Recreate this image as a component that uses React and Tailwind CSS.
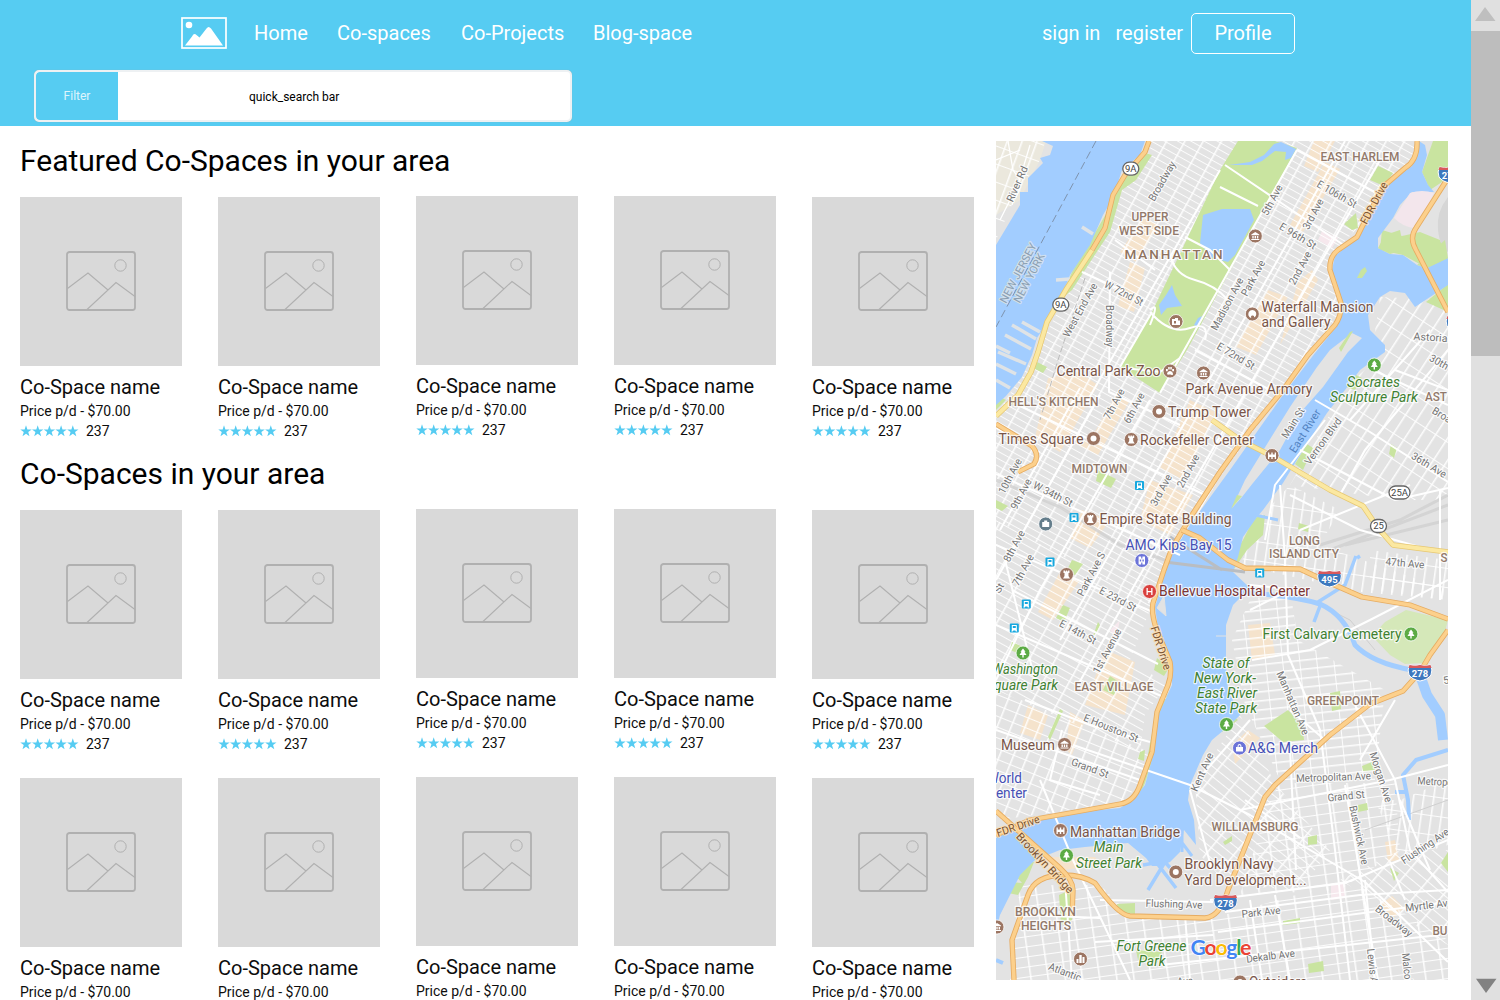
import React from "react";

const STAR = "M6 .3 7.400 4.400 11.700 4.450 8.250 7 9.500 11.200 6 8.700 2.500 11.200 3.750 7 .3 4.450 4.600 4.400Z";

function Card({ raised }) {
  return (
    <article className={raised ? "-mt-px w-[162px]" : "w-[162px]"}>
      <div className="flex h-[169px] items-center justify-center bg-[#d9d9d9] pb-[2px]">
        <svg width="70" height="60" viewBox="0 0 70 60" fill="none" stroke="#b0b0b0">
          <rect x="1" y="1" width="68" height="58" rx="2.5" strokeWidth="1.8" />
          <circle cx="54.5" cy="14.5" r="5.7" />
          <path d="M1.5 37.5 22 22l20 17M20.500 59 50 31.500 69 45.500" strokeWidth="1.1" />
        </svg>
      </div>
      <h3 className="mt-[9px] h-6 whitespace-nowrap text-[20px] leading-6">Co-Space name</h3>
      <p className="mt-[3px] h-[18px] text-[14px] leading-[18px]">Price p/d - $70.00</p>
      <div className="mt-[2px] flex h-[18px] items-center text-[14px] leading-[18px]">
        <svg className="mr-[7px]" width="59" height="12" viewBox="0 0 59 12" fill="#56ccf2">
          {[0, 1, 2, 3, 4].map((i) => (
            <path key={i} d={STAR} transform={`translate(${i * 11.7})`} />
          ))}
        </svg>
        237
      </div>
    </article>
  );
}

function CardRow() {
  return (
    <div className="flex gap-9">
      {[0, 1, 2, 3, 4].map((i) => (
        <Card key={i} raised={i === 2 || i === 3} />
      ))}
    </div>
  );
}

/* [id, angle, column width, row height] */
const GRIDS = [
  ["mh", 29, 16, 6.4],
  ["lm", 22, 13, 10],
  ["ev", 29, 23, 7],
  ["as", 33, 12, 22],
  ["li", 8, 10, 19],
  ["gp", 84, 9, 17],
  ["wb", 39, 22, 8],
  ["bk", -8, 17, 10],
  ["bw", 40, 21, 9],
  ["nj", 20, 14, 17],
];

const BLOCKS = [
  ["mh", "1150,141 1417,141 1410,165 1380,188 1365,220 1332,255 1330,270 1341,305 1335,325 1308,355 1220,477 1165,570 1152,605 996,520 996,415 1032,360 1090,250 1125,175"],
  ["ev", "996,520 1152,605 1130,660 1168,685 1145,714 1140,752 996,690"],
  ["lm", "996,690 1150,752 1140,785 1120,803 1065,811 996,820"],
  ["as", "1380,297 1448,300 1448,500 1400,500 1290,485 1330,414 1348,385 1370,365"],
  ["li", "1290,485 1340,510 1320,545 1448,590 1448,600 1360,592 1240,565 1262,515"],
  ["li", "1370,550 1448,560 1448,600 1370,590"],
  ["gp", "1250,600 1290,590 1298,640 1350,670 1385,690 1375,780 1280,780 1245,705 1232,640"],
  ["wb", "1240,715 1275,783 1330,850 1300,890 1228,885 1200,855 1195,783"],
  ["bk", "1020,885 1100,885 1130,915 1213,918 1350,880 1448,940 1448,980 1010,980"],
  ["bk", "1280,783 1395,783 1400,850 1340,890 1240,895 1270,800"],
  ["bw", "1340,880 1400,850 1448,850 1448,945"],
  ["li", "1400,800 1448,780 1448,845 1400,860 1375,800"],
  ["nj", "996,141 1045,141 1040,160 1028,178 1012,205 996,240"],
];

const PEACH = [
  "1290,225 1325,162 1340,169 1303,232",
  "1314,141 1335,141 1318,172 1304,166",
  "1143,218 1158,225 1136,262 1120,252",
  "1130,262 1145,268 1134,312 1118,306",
  "1268,290 1288,297 1256,355 1236,347",
  "1280,345 1298,282 1312,270 1318,280",
  "1048,378 1078,372 1098,385 1060,452 1035,438",
  "1096,430 1116,395 1129,402 1098,455 1080,446",
  "1190,400 1215,412 1208,428 1193,460 1180,478 1160,468",
  "1150,480 1193,495 1170,535 1140,520",
  "1082,510 1110,520 1090,548 1070,538",
  "1060,572 1080,580 1053,620 1038,612",
  "1248,625 1270,623 1275,655 1252,660",
  "1105,650 1135,662 1125,715 1085,705",
  "1028,705 1048,715 1040,740 1020,733",
  "1070,712 1085,720 1072,755 1066,750",
  "1045,857 1095,857 1100,865 1050,872",
  "1232,745 1248,730 1260,738 1235,764",
  "1385,842 1395,840 1399,860 1388,862",
  "1380,905 1392,896 1404,908 1393,918",
];

const PARKS = [
  "1238,141 1275,141 1297,148 1262,212 1187,350 1160,393 1120,367 1152,312 1220,170",
  "1143,152 1152,155 1136,180 1122,190 1110,232 1098,250 1072,290 1060,300 1072,272 1106,214 1117,186",
  "1378,166 1393,173 1384,186 1370,180",
  "1433,141 1448,141 1448,178 1430,190 1422,172",
  "1382,230 1402,236 1420,232 1440,240 1448,260 1427,268 1403,255 1380,250",
  "1448,284 1448,312 1426,302",
  "1356,213 1358,228 1352,230 1344,224",
  "1341,352 1353,331 1348,328 1337,340",
  "1343,386 1352,373 1362,378 1355,390",
  "1307,444 1313,448 1303,470 1295,464",
  "1243,540 1254,518 1265,515 1263,535 1247,550 1232,572 1227,566",
  "1391,444 1397,448 1394,458 1389,454",
  "1299,523 1309,526 1308,532 1298,529",
  "1037,362 1047,367 1043,373 1033,368",
  "996,395 1006,400 996,410",
  "1098,470 1116,479 1111,488 1096,481",
  "1072,560 1083,564 1075,575 1066,572",
  "996,500 1008,506 1002,511 996,508",
  "1063,605 1070,608 1064,622 1056,618",
  "1100,625 1096,633 1093,636 1098,622",
  "1012,642 1030,650 1022,655 1010,650",
  "1110,676 1119,682 1114,695 1103,690",
  "1060,709 1063,711 1050,740 1048,737",
  "1157,658 1169,668 1164,676 1154,670",
  "1140,752 1145,750 1144,761 1138,759",
  "1170,690 1162,730 1145,783 1136,803 1124,806 1143,780 1155,718",
  "1264,726 1288,710 1302,725 1304,740 1283,742",
  "1330,693 1340,691 1341,709 1332,711",
  "1362,766 1372,762 1375,770 1363,771",
  "1308,837 1317,835 1317,844 1308,845",
  "1390,868 1399,873 1394,881",
  "1223,842 1232,836 1232,841 1225,845",
  "1358,805 1367,803 1368,810 1358,812",
  "1015,875 1023,862 1034,862 1028,877 1018,895 1003,892 1008,882 1022,883",
  "1059,895 1070,890 1072,920 1061,925",
  "1117,904 1135,903 1135,914 1118,912",
  "1136,950 1162,952 1157,963 1138,960",
  "1308,964 1323,961 1324,971 1309,973",
  "1283,921 1300,918 1300,923 1283,925",
  "1448,852 1448,872 1441,863",
  "1218,718 1230,714 1238,720 1222,732",
];

const WATER = [
  "1042,141 1145,141 1140,155 1122,170 1113,198 1103,215 1090,245 1070,275 1065,288 1050,318 1037,338 1032,355 1022,377 1006,396 996,405 996,245 1020,205 1020,192 1028,192 1028,178 1043,163 1040,158 1050,155 1053,146",
  "1419,141 1425,145 1427,155 1422,172 1428,185 1434,192 1412,192 1400,205 1393,218 1378,238 1378,248 1390,254 1403,255 1417,265 1427,268 1448,258 1448,285 1433,295 1415,307 1405,293 1390,291 1380,297 1368,315 1370,330 1385,345 1385,352 1360,370 1345,390 1327,413 1303,450 1283,483 1263,510 1257,517 1243,537 1238,557 1233,572 1250,588 1233,605 1226,625 1226,665 1228,690 1240,715 1230,725 1212,740 1203,755 1190,785 1188,800 1194,820 1196,845 1184,830 1180,852 1170,862 1160,866 1152,866 1146,858 1128,843 1085,847 1060,850 1035,860 1020,875 1005,905 1000,915 996,930 996,838 1030,820 1070,813 1120,808 1133,800 1145,785 1154,752 1157,718 1172,685 1171,660 1158,628 1155,607 1166,570 1173,552 1190,525 1230,470 1283,395 1315,353 1337,326 1343,305 1332,270 1335,256 1352,242 1367,220 1382,188 1412,166",
  "1203,215 1222,209 1250,209 1254,220 1235,255 1228,262 1212,258 1200,243",
  "1172,285 1175,295 1182,306 1167,308 1161,315 1159,305 1166,295",
  "1274,144 1281,142 1296,149 1291,158 1285,160 1286,152 1275,151 1262,161 1252,165 1229,165 1250,162 1264,155",
  "1198,318 1202,316 1198,327 1194,325",
];

const WHITE = [
  "M1025 700 1090 725 1150 742M1073 745 1190 785 1250 815 1365 882 1448 962M1040 780 1073 860 1130 980M1062 730 1050 780 1100 795M1005 560 1035 680M996 730 1140 780",
  "M1315 400 1370 432 1448 482M1448 350 1365 450 1340 495M1373 370 1448 405M1430 330 1350 420M1395 370 1448 390M1300 450 1395 500 1448 488M1325 420 1275 485 1265 540",
  "M1280 485 1285 560 1288 655 1320 730 1335 850 1350 980M1300 530 1410 485M1290 495 1360 530 1430 550M1250 585 1300 590M1252 660 1310 650 1370 620 1448 580M1290 710 1325 740M1250 610 1280 595M1440 490 1440 600M1355 705 1395 780 1410 850 1448 892",
  "M1190 790 1212 870M1195 783 1250 720M1240 810 1390 780 1448 765M1245 800 1300 838M1290 750 1296 870M1210 900 1345 883 1448 840M1225 912 1360 895 1448 890M1218 932 1448 902M1160 965 1440 935M1100 900 1213 902M1095 942 1213 935M1345 785 1378 980M1390 862 1405 900M1365 880 1375 980M1250 900 1262 980M1185 915 1190 980M1030 915 1100 918M1065 880 1072 980M1400 800 1430 870M1275 895 1290 980M1395 700 1360 760",
  "M1152 312 1120 367M1220 170 1085 405M1297 150 1160 393M1345 141 1255 300 1060 640M1380 160 1160 540 1075 690M1082 272 1132 295M1155 270 1115 240M1195 350 1270 390M1018 405 1205 495M996 474 1180 555M996 545 1153 612M1012 590 1158 664M996 625 1166 698M1225 165 1345 246M1297 150 1380 195M1110 272 1109 392 1180 425M1080 388 1000 530M1100 395 996 580M1150 400 1040 590 996 680",
  "M1185 237 1210 250 1230 270M1170 255Q1175 275 1195 280T1228 300M1220 187 1258 206M1150 325Q1160 300 1150 310M1150 312Q1170 335 1190 328T1205 340M1124 368 1160 372 1180 358",
];

const ORANGE = [
  "M1149 141 1145 152 1125 175 1113 195 1105 228 1092 250",
  "M996 424 1032 446Q1040 455 1034 464L1018 472",
  "M1417 141Q1418 160 1405 168L1384 186 1368 215 1357 237 1338 250Q1329 257 1330 270L1341 303Q1342 315 1335 325L1308 355 1283 390 1250 430 1220 472 1190 518 1172 548 1164 570 1153 603Q1151 612 1156 628L1170 662Q1172 675 1168 685L1157 712 1152 752 1140 785Q1134 802 1120 804L1070 813 1030 820 996 835",
  "M1448 178 1416 228Q1409 238 1416 250L1448 312",
  "M1182 530 1200 538 1228 560 1245 568 1300 569 1330 583 1362 597 1410 605 1448 619",
  "M1448 630 1430 655 1420 672 1403 691 1370 704 1330 735 1275 785 1265 797 1228 890Q1220 917 1205 918L1130 916Q1118 915 1095 883 1082 875 1064 875 1035 875 1028 895L1012 940 1014 980",
  "M996 811 1060 868Q1073 880 1073 890L1072 916",
];

const YELLOW = [
  "M1092 250 1067 288 1047 322 1038 352 1031 372 1018 395 996 416",
  "M1212 420 1240 440 1272 456 1330 490 1363 506 1378 528 1393 545 1448 552",
];

/* [text, centre x, centre y, font size, width, angle] */
const GREY = "#747474";
const STREETS = [
  ["River Rd", 1017, 184, 10.5, 38, -66],
  ["Broadway", 1162, 181, 10.5, 44, -60],
  ["W 72nd St", 1124, 293, 10.5, 42, 27],
  ["West End Ave", 1080, 310, 10.5, 60, -61],
  ["Broadway", 1110, 326, 10.5, 42, 90],
  ["5th Ave", 1272, 200, 10.5, 33, -62],
  ["3rd Ave", 1313, 214, 10.5, 33, -62],
  ["E 106th St", 1337, 194, 10.5, 44, 30],
  ["E 96th St", 1298, 236, 10.5, 41, 31],
  ["2nd Ave", 1300, 268, 10.5, 36, -62],
  ["Park Ave", 1253, 278, 10.5, 39, -62],
  ["Madison Ave", 1227, 304, 10.5, 58, -62],
  ["E 72nd St", 1236, 356, 10.5, 42, 31],
  ["7th Ave", 1114, 404, 10.5, 33, -62],
  ["6th Ave", 1134, 408, 10.5, 33, -62],
  ["2nd Ave", 1188, 471, 10.5, 36, -62],
  ["3rd Ave", 1161, 490, 10.5, 34, -62],
  ["10th Ave", 1010, 476, 10.5, 38, -62],
  ["9th Ave", 1021, 494, 10.5, 33, -62],
  ["W 34th St", 1053, 494, 10.5, 43, 27],
  ["8th Ave", 1014, 546, 10.5, 34, -62],
  ["7th Ave", 1023, 570, 10.5, 34, -62],
  ["Park Ave S", 1091, 574, 10.5, 48, -62],
  ["E 23rd St", 1118, 599, 10.5, 40, 28],
  ["E 14th St", 1078, 632, 10.5, 40, 28],
  ["1st Avenue", 1107, 651, 10.5, 49, -62],
  ["E Houston St", 1111, 728, 10.5, 58, 22],
  ["Grand St", 1090, 768, 10.5, 39, 20],
  ["Main St", 1293, 423, 10.5, 34, -58],
  ["Vernon Blvd", 1323, 441, 10.5, 55, -54],
  ["30th", 1439, 362, 10.5, 20, 29],
  ["Broadway", 1452, 421, 10.5, 44, 31],
  ["36th Ave", 1429, 465, 10.5, 39, 31],
  ["Astoria Blvd", 1442, 338, 10.5, 57, 4],
  ["47th Ave", 1405, 563, 10.5, 39, 5],
  ["Manhattan Ave", 1293, 703, 10.5, 68, 67],
  ["Kent Ave", 1202, 772, 10.5, 41, -66],
  ["Metropolitan Ave", 1333.500, 777, 10.5, 75, -2],
  ["Metropolitan", 1444, 782, 10.5, 53, 3],
  ["Morgan Ave", 1381, 777, 10.5, 52, 72],
  ["Grand St", 1346, 796, 10.5, 37, -6],
  ["Bushwick Ave", 1359, 835, 10.5, 60, 78],
  ["Flushing Ave", 1425, 846, 10.5, 55, -34],
  ["Flushing Ave", 1174, 904, 10.5, 57, 2],
  ["Park Ave", 1261, 912, 10.5, 39, -6],
  ["Broadway", 1394, 921, 10.5, 44, 38],
  ["Myrtle Ave", 1429, 905, 10.5, 48, -7],
  ["Dekalb Ave", 1270.500, 956, 10.5, 49, -7],
  ["Lewis Ave", 1373, 971, 10.5, 45, 84],
  ["Malcolm X Blvd", 1409, 986, 10.5, 66, 84],
  ["Atlantic", 1065, 972, 10.5, 34, 21],
  ["Ave", 1185, 981, 10.5, 16, -4],
  ["St", 999, 588, 10, 10, -60],
  ["5", 1446, 680, 10.5, 6, -10],
];

const AREAS = [
  ["EAST HARLEM", 1360, 157, 12, 79],
  ["UPPER", 1150, 217, 12, 37],
  ["WEST SIDE", 1149, 231, 12, 60],
  ["HELL'S KITCHEN", 1053.500, 401.500, 12, 90],
  ["MIDTOWN", 1099.500, 469, 12, 56],
  ["AST", 1436, 397, 12, 22],
  ["LONG", 1304.500, 540.500, 12, 31],
  ["ISLAND CITY", 1304, 553.500, 12, 70],
  ["S", 1444, 558, 12, 7],
  ["EAST VILLAGE", 1114, 686.500, 12, 79],
  ["GREENPOINT", 1343, 700.500, 12, 72],
  ["WILLIAMSBURG", 1255, 826.500, 12, 87],
  ["BROOKLYN", 1045.500, 912, 12, 61],
  ["HEIGHTS", 1046, 926, 12, 50],
  ["BU", 1440, 931, 12, 15],
];

const BROWN = [
  ["Waterfall Mansion", 1317.500, 307, 112],
  ["and Gallery", 1296, 322, 69],
  ["Central Park Zoo", 1108.500, 370.500, 104],
  ["Park Avenue Armory", 1249, 388.500, 127],
  ["Trump Tower", 1209.500, 411.500, 83],
  ["Times Square", 1041, 438.500, 85],
  ["Rockefeller Center", 1197, 440, 114],
  ["Empire State Building", 1165.500, 518.500, 132],
  ["Museum", 1028, 744.500, 54],
  ["Manhattan Bridge", 1125, 831.500, 110],
  ["Brooklyn Navy", 1229, 864, 89],
  ["Yard Development...", 1245.500, 880, 122],
  ["Outsiders", 1278, 982, 58],
];

const GREEN = [
  ["Socrates", 1373.500, 382, 53, true],
  ["Sculpture Park", 1374, 396.500, 88, true],
  ["Washington", 1025, 668.500, 66, true],
  ["Square Park", 1022, 684.500, 72, true],
  ["State of", 1226, 662.500, 47, true],
  ["New York-", 1225, 677.500, 62, true],
  ["East River", 1227, 693, 60, true],
  ["State Park", 1226, 708, 62, true],
  ["Main", 1108.500, 847, 30, true],
  ["Street Park", 1109, 863, 66, true],
  ["Fort Greene", 1151.500, 945.500, 70, true],
  ["Park", 1152, 961, 27, true],
  ["First Calvary Cemetery", 1332, 634, 139, false],
];

function Label({ t, x, y, s, w, a = 0, fill, weight = 400, italic = false, halo = "#ffffff" }) {
  return (
    <text
      x={x}
      y={y + s * 0.35}
      fontSize={s}
      textLength={w}
      lengthAdjust="spacingAndGlyphs"
      textAnchor="middle"
      fill={fill}
      fontWeight={weight}
      fontStyle={italic ? "italic" : "normal"}
      stroke={halo}
      strokeOpacity=".8"
      strokeWidth="2.4"
      strokeLinejoin="round"
      paintOrder="stroke"
      transform={a ? `rotate(${a} ${x} ${y})` : undefined}
    >
      {t}
    </text>
  );
}

const GLYPHS = {
  museum: "M-4-1.500 0-4 4-1.500V-.7H-4ZM-3 0h1.400v2.500H-3ZM-.7 0H.7V2.500H-.7ZM1.600 0H3V2.500H1.600ZM-4 3h8v1h-8Z",
  tower: "M-3-4h1.500v1H-.7V-4H.7v1h.8V-4H3v2.500H2V1.500L3.500 4H-3.500L-2 1.500V-1.500H-3Z",
  tree: "M0-4.500 2.500-1.200H1.400L3.500 2H.7V4.500H-.7V2h-2.800l2.100-3.200H-2.500Z",
  paw: "M-3 3C-3 1-1 0 0 0S3 1 3 3 1 3.500 0 3.500-3 4-3 3M-4-2h1.800V.3H-4ZM-1.800-4H-.3v2.500h-1.500ZM.3-4h1.500v2.500H.3ZM2.200-2H4V.3H2.200Z",
  bridge: "M-4-3h1.300v2H-.7v-2H.7v2h2v-2H4V3.500H2.700V1.500H.7v2H-.7v-2h-2v2H-4Z",
  city: "M-4 4V0h2V4ZM-1.200 4V-4H1.200V4ZM2 4V-2H4V4Z",
  film: "M-3.200-4H-.6v2H.6v-2H3.200V4H.6V2H-.6V4H-3.200ZM-2-1V1H-.6V-1ZM.6-1V1H2V-1Z",
  bag: "M-3.500-1h1.500Q-2-4 0-4T2-1H3.500V3.500h-7ZM-1-1H1Q1-3 0-3T-1-1Z",
  art: "M-4 0A4 4 0 1 1 2 3.500Q2 1 0 1.500T-1 4Q-4 3-4 0",
  camera: "M-4-2.500H-1V-3.500H2V-1H4V3.500H-4ZM-2-.5V2H0V-.5Z",
  case: "M-3.500-2h2v-1.500h3V-2h2V3h-7Z",
  h: "M-3-3.500h1.300V-.6H1.700V-3.500H3V3.500H1.700V.7H-1.700V3.500H-3Z",
};

/* [glyph, x, y, colour] */
const PINS = [
  ["museum", 1255.300, 236, "#9c7562"],
  ["art", 1252.300, 314, "#9c7562"],
  ["camera", 1176, 321.500, "#9c7562"],
  ["paw", 1170, 371, "#9c7562"],
  ["museum", 1203.500, 373, "#9c7562"],
  ["dot", 1159, 411.500, "#9c7562"],
  ["dot", 1093.500, 438.500, "#9c7562"],
  ["tower", 1131.200, 439.500, "#9c7562"],
  ["bridge", 1272, 455.500, "#9c7562"],
  ["tower", 1090.300, 519, "#9c7562"],
  ["tower", 1066.500, 574.500, "#9c7562"],
  ["museum", 1064.500, 744.500, "#9c7562"],
  ["bridge", 1060.500, 830.500, "#9c7562"],
  ["dot", 1175.800, 872, "#9c7562"],
  ["city", 1080.500, 959, "#9c7562"],
  ["museum", 997, 927, "#9c7562"],
  ["dot", 1240, 982, "#9c7562"],
  ["tree", 1374.300, 365, "#5cab45"],
  ["tree", 1023, 653, "#5cab45"],
  ["tree", 1226.500, 724.500, "#5cab45"],
  ["tree", 1066.500, 855.500, "#5cab45"],
  ["tree", 1411, 634, "#5cab45"],
  ["h", 1149.500, 591.500, "#d9413e"],
  ["film", 1141.800, 560.500, "#6b73d8"],
  ["bag", 1239.500, 748, "#6b73d8"],
  ["case", 1045.700, 524, "#647d8b"],
];

const STATIONS = [[1139.500, 485.500], [1074, 517.500], [1050, 562], [1026.300, 604], [1014.300, 628], [1259.700, 573]];

function Shield({ x, y, t }) {
  return (
    <g transform={`translate(${x} ${y})`}>
      <path d="M-10.500-8Q-5-6.500 0-8 5-6.500 10.500-8 13-3 11 2 8 6.500 0 8-8 6.500-11 2-13-3-10.500-8Z" fill="#3d78be" stroke="#fff" />
      <path d="M-10.500-8Q-5-6.500 0-8 5-6.500 10.500-8L11.500-5H-11.500Z" fill="#d9585b" />
      <text y="4.300" fontSize="9.500" fontWeight="700" fill="#fff" textAnchor="middle">{t}</text>
    </g>
  );
}

function RouteSign({ x, y, t, w }) {
  return (
    <g transform={`translate(${x} ${y})`}>
      <rect x={-w / 2} y="-6.500" width={w} height="13" rx="6.500" fill="#fff" stroke="#656565" strokeWidth="1.300" />
      <text y="3.400" fontSize="9.500" fill="#444" textAnchor="middle">{t}</text>
    </g>
  );
}

function CityMap() {
  return (
    <svg className="block h-[839px] w-[452px]" viewBox="996 141 452 839" fontFamily="Roboto, sans-serif">
      <defs>
        {GRIDS.map(([id, a, w, h]) => (
          <pattern key={id} id={id} width={w} height={h} patternUnits="userSpaceOnUse" patternTransform={`rotate(${a})`}>
            <path d={`M0 .5H${w}`} stroke="#fff" strokeWidth=".9" />
            <path d={`M.8 0V${h}`} stroke="#fff" strokeWidth="1.400" />
          </pattern>
        ))}
      </defs>
      <rect x="996" y="141" width="452" height="839" fill="#e3e3e3" />
      <path d="M996 141H1046L1040 160 1020 200 996 215Z" fill="#ebe8dd" />
      {PEACH.map((p) => <polygon key={p} points={p} fill="#f5e3cc" />)}
      <path d="M1322 231 1338 238 1332 248 1318 240ZM1331 884 1345 882 1345 898 1331 900ZM1110 630 1120 620 1116 638Z" fill="#f6e8ed" />
      {BLOCKS.map(([g, p]) => <polygon key={p} points={p} fill={`url(#${g})`} />)}
      <g fill="none" stroke="#cfcfcf" strokeWidth="3">
        <path d="M996 480 1060 507 1120 545 1165 560M1320 545 1400 520 1448 495M1330 550 1448 505M1345 545 1448 520" strokeOpacity=".8" />
        <path d="M1365 830 1448 800M1300 595 1350 620 1375 650" strokeWidth="1" />
      </g>
      {PARKS.map((p) => <polygon key={p} points={p} fill="#c9e4a0" />)}
      <path d="M1406 610 1448 620 1444 635 1424 663 1405 664 1390 655 1372 636 1385 622Z" fill="#d5e8b9" />
      {WATER.map((p) => <polygon key={p} points={p} fill="#a2cdff" />)}
      <path d="M1410 193Q1422 189 1434 193L1428 205 1413 228Q1402 226 1394 218Z" fill="#f3e6ec" />
      <path d="M1448 197Q1436 212 1438 230T1448 252Z" fill="#d6d6d6" />
      <path d="M1385 235 1400 230 1404 250 1390 254 1378 248ZM1417 265 1445 240 1448 258 1427 268ZM1357 278 1361 270 1365 267 1367 271 1362 278Z" fill="#c9e4a0" />
      <path d="M1352 333 1362 338 1348 352 1323 387 1300 413 1280 450 1253 483 1242 497 1232 508 1245 480 1272 436 1290 407 1317 367 1330 350Z" fill="#e3e3e3" />
      <path d="M1237 495 1242 496 1231 509ZM1350 332 1353 331 1341 352 1339 348Z" fill="#c9e4a0" />
      <g fill="none" stroke="#a2cdff" strokeLinejoin="round">
        <path d="M1235 592Q1290 595 1320 604 1345 615 1355 645 1372 663 1412 670" strokeWidth="5" />
        <path d="M1318 602 1345 585 1356 556M1320 606 1314 622M1357 558 1360 556" strokeWidth="3.500" />
        <path d="M1420 675 1427 695 1440 715 1443 740" strokeWidth="10" />
        <path d="M1448 750 1416 760 1403 775 1408 800 1409 820M1395 792H1406" strokeWidth="4" />
        <path d="M1255 515 1278 520M1165 820 1192 856M1182 832V852" strokeWidth="3" />
        <path d="M1165 862 1148 890M1156 862 1176 888M1143 865 1160 862M1150 845 1172 870" strokeWidth="3.500" />
        <path d="M996 960 1003 963" strokeWidth="4" />
      </g>
      <path d="M996 346 1010 353M996 364 1016 374M998 352 1026 364M1005 335 1031 349M1012 325 1036 339M1022 322 1040 332M996 380 1010 388M1056 280 1070 279M1082 227 1093 234" stroke="#dfe3e6" strokeWidth="3.500" />
      <path d="M1170 537 1222 570M1165 562 1245 572" fill="none" stroke="#b9bdc2" strokeWidth="3" />
      <path d="M1216 636H1226M1157 608 1166 616 1164 596Z" fill="#e3e3e3" stroke="#e3e3e3" />
      <path d="M1096 141 996 327" stroke="#7e93ae" strokeDasharray="8 4" fill="none" />
      <path d="M1085 278 1058 360 1040 420" stroke="#bcbcbc" strokeDasharray="6 3" fill="none" />
      <g fill="none" stroke="#fff" strokeWidth="2" strokeLinejoin="round">
        {WHITE.map((d) => <path key={d} d={d} />)}
      </g>
      <path d="M996 428 1040 452M996 160 1020 150M1008 141 1013 170 1020 180 1000 220M1030 145 1012 205" fill="none" stroke="#fff" strokeWidth="1.300" />
      {YELLOW.map((d) => (
        <g key={d} fill="none" strokeLinejoin="round">
          <path d={d} stroke="#e7c872" strokeWidth="5.500" />
          <path d={d} stroke="#fbe8a1" strokeWidth="4" />
        </g>
      ))}
      {ORANGE.map((d) => (
        <g key={d} fill="none" strokeLinejoin="round">
          <path d={d} stroke="#e6ac62" strokeWidth="5.300" />
          <path d={d} stroke="#fcd08c" strokeWidth="3.600" />
        </g>
      ))}

      {STREETS.map(([t, x, y, s, w, a]) => <Label key={t + x} {...{ t, x, y, s, w, a }} fill={GREY} />)}
      <Label t="NEW JERSEY" x={1018} y={273} s={11} w={66} a={-62} fill="#8b9fb3" halo="#dde5ea" />
      <Label t="NEW YORK" x={1029} y={278} s={11} w={54} a={-62} fill="#8b9fb3" halo="#dde5ea" />
      <Label t="East River" x={1305} y={431} s={11} w={49} a={-58} fill="#5182bf" halo="#a2cdff" />
      <Label t="FDR Drive" x={1374} y={203} s={11} w={46} a={-62} fill="#7a5230" halo="#fbe0b8" />
      <Label t="FDR Drive" x={1161} y={648} s={11} w={45} a={72} fill="#7a5230" halo="#fbe0b8" />
      <Label t="FDR Drive" x={1018} y={826} s={11} w={45} a={-19} fill="#7a5230" halo="#fbe0b8" />
      <Label t="Brooklyn Bridge" x={1045} y={863} s={11} w={78} a={47} fill="#7a5230" halo="#fbe0b8" />
      <text x="1124.500" y="259" fontSize="13.500" fontWeight="500" textLength="98" fill="#8f735f" stroke="#fff" strokeWidth="2" paintOrder="stroke">MANHATTAN</text>
      {AREAS.map(([t, x, y, s, w]) => <Label key={t + x} {...{ t, x, y, s, w }} fill="#92796a" weight={500} />)}
      {BROWN.map(([t, x, y, w]) => <Label key={t} {...{ t, x, y, w }} s={14.300} fill="#795548" />)}
      {GREEN.map(([t, x, y, w, italic]) => <Label key={t + y} {...{ t, x, y, w, italic }} s={14.300} fill="#3f8132" />)}
      <Label t="AMC Kips Bay 15" x={1178.500} y={544.500} s={14.300} w={106} fill="#4650b5" />
      <Label t="A&G Merch" x={1283} y={748} s={14.300} w={70} fill="#4650b5" />
      <Label t="World" x={1004.500} y={777.500} s={14.300} w={35} fill="#4650b5" />
      <Label t="Center" x={1007} y={792.500} s={14.300} w={40} fill="#4650b5" />
      <Label t="Bellevue Hospital Center" x={1234.500} y={591} s={14.300} w={151} fill="#7c3535" />

      {PINS.map(([g, x, y, c]) => (
        <g key={`${x}-${y}`} transform={`translate(${x} ${y})`}>
          <circle r="7" fill={c} stroke="#fff" strokeOpacity=".8" />
          {g === "dot" ? <circle r="3" fill="#fff" /> : <path d={GLYPHS[g]} fill="#fff" fillRule="evenodd" />}
        </g>
      ))}
      {STATIONS.map(([x, y]) => (
        <g key={x} transform={`translate(${x} ${y})`}>
          <rect x="-4.500" y="-4.500" width="9" height="9" rx="1" fill="#16a8df" />
          <path d="M-2.500-3h5V2L3 3.500H1.500L1 2.500H-1L-1.500 3.500H-3L-2.500 2Z" fill="#fff" />
          <path d="M-1.500-2h3v2h-3Z" fill="#16a8df" />
        </g>
      ))}
      <RouteSign x={1130.800} y={168.700} t="9A" w={16} />
      <RouteSign x={1060.800} y={304.700} t="9A" w={16} />
      <RouteSign x={1399.500} y={492.500} t="25A" w={21} />
      <RouteSign x={1378.500} y={526} t="25" w={16} />
      <Shield x={1329.500} y={579} t="495" />
      <Shield x={1420} y={673} t="278" />
      <Shield x={1225.500} y={903} t="278" />
      <Shield x={1450} y={175} t="278" />
      <Shield x={1458} y={324} t="278" />
      <text x="1190.500" y="954.500" fontFamily="Lato, sans-serif" fontSize="21.500" fontWeight="700" textLength="61" stroke="#fff" strokeWidth="1.500" paintOrder="stroke">
        <tspan fill="#4285f4">G</tspan>
        <tspan fill="#ea4335">o</tspan>
        <tspan fill="#fbbc05">o</tspan>
        <tspan fill="#4285f4">g</tspan>
        <tspan fill="#34a853">l</tspan>
        <tspan fill="#ea4335">e</tspan>
      </text>
    </svg>
  );
}

function Header() {
  return (
    <header className="h-[126px] bg-[#56ccf2] text-[20px] text-white">
      <div className="flex h-[70px] items-start pl-[181px]">
        <svg className="mt-[17px]" width="46" height="32" viewBox="0 0 46 32" fill="#fff">
          <rect x="1" y="1" width="44" height="30" fill="none" stroke="#fff" strokeWidth="1.700" />
          <circle cx="8" cy="8" r="3.300" />
          <path d="M4 28.500 11 19.500Q13 15.500 15.500 18L18.500 20.500 25.500 11.500Q27.500 8.500 30 11.500L42 28.500Z" />
        </svg>
        <nav className="mt-[21px] ml-[27px] flex leading-6 whitespace-nowrap">
          <a className="w-[83px]">Home</a>
          <a className="w-[124px]">Co-spaces</a>
          <a className="w-[132px]">Co-Projects</a>
          <a className="w-[449px]">Blog-space</a>
          <a className="w-[73.500px]">sign in</a>
          <a className="w-[75.500px]">register</a>
        </nav>
        <button className="mt-[13px] flex h-[41px] w-[104px] items-start justify-center rounded-[5px] border border-white pt-[7px] leading-6">Profile</button>
      </div>
      <div className="ml-[34px] flex h-[52px] w-[538px] overflow-hidden rounded-[5px] border-2 border-[#eef1f3] bg-white text-[12px] shadow-[0_0_1px_#9aa]">
        <div className="flex w-[82px] items-center justify-center rounded-l-[4px] bg-[#56ccf2] text-white/80">Filter</div>
        <div className="flex items-center pt-px pl-[131px] text-black">quick_search bar</div>
      </div>
    </header>
  );
}

export default function App() {
  return (
    <div className="flex h-[1000px] w-[1500px] overflow-hidden bg-white font-[Roboto,sans-serif] text-[#0d0d0d]">
      <div className="w-[1471px] shrink-0">
        <Header />
        <div className="flex">
          <main className="w-[996px] shrink-0 pl-5">
            <h2 className="mt-[17px] h-9 text-[30px] leading-9 text-black">Featured Co-Spaces in your area</h2>
            <div className="mt-[18px]"><CardRow /></div>
            <h2 className="mt-[16px] h-9 text-[30px] leading-9 text-black">Co-Spaces in your area</h2>
            <div className="mt-[18px]"><CardRow /></div>
            <div className="mt-[25px]"><CardRow /></div>
          </main>
          <aside className="mt-[15px] h-[839px] w-[452px] overflow-hidden"><CityMap /></aside>
        </div>
      </div>
      <div className="flex w-[29px] flex-col justify-between bg-[#e0e0e0]">
        <div>
          <svg className="block" width="29" height="31" viewBox="0 0 29 31"><path d="M4 21H24.500L14 7Z" fill="#bfbfbf" /></svg>
          <div className="h-[325px] bg-[#bdbdbd]" />
        </div>
        <svg className="block" width="29" height="22" viewBox="0 0 29 22"><path d="M5 .8H25.500L15 15Z" fill="#828282" /></svg>
      </div>
    </div>
  );
}
